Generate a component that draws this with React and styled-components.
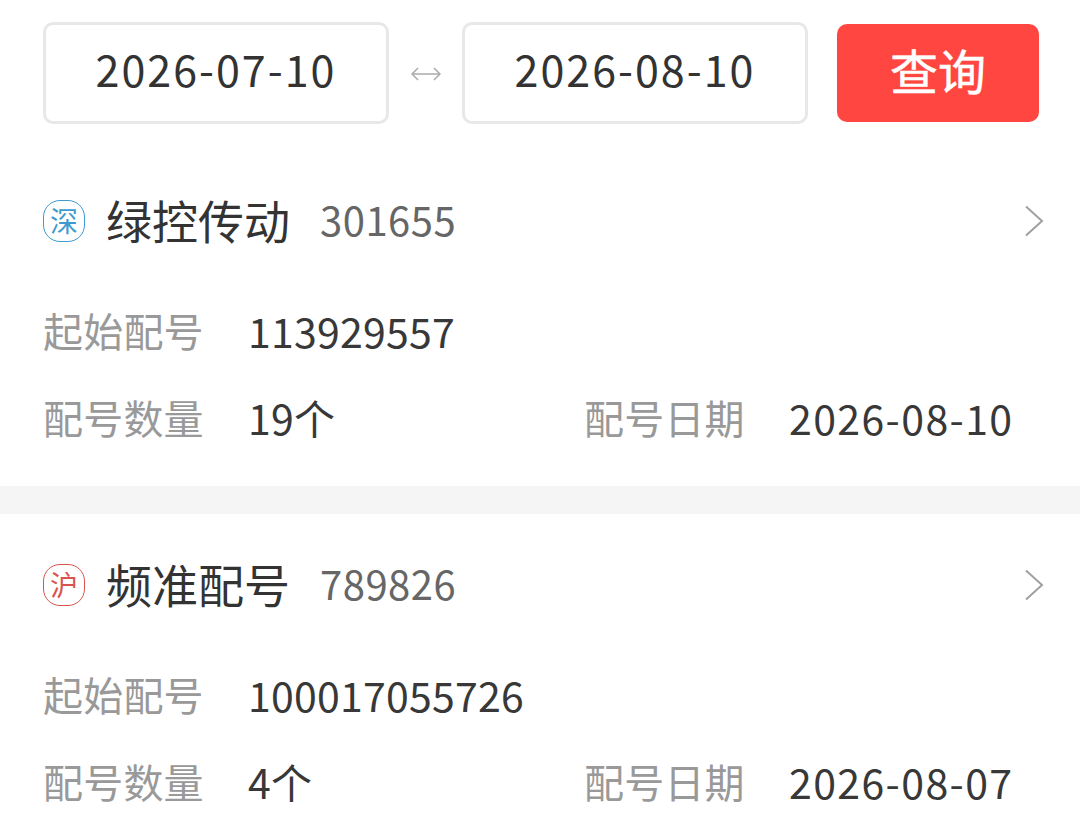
import styled, { createGlobalStyle } from 'styled-components'

const GlobalStyle = createGlobalStyle`
  html, body {
    margin: 0;
    padding: 0;
    background: #FFFFFF;
    overflow: hidden;
  }
  body {
    font-family: 'Noto Sans CJK SC', 'Noto Sans', sans-serif;
  }
`

const Page = styled.div`
  width: 1080px;
  height: 833px;
  overflow: hidden;
`

const FilterBar = styled.div`
  display: flex;
  align-items: center;
  height: 102px;
  padding: 22px 41px 0 43px;
`

const DateBox = styled.div`
  width: 346px;
  height: 102px;
  box-sizing: border-box;
  border: 3px solid #E8E8E8;
  border-radius: 10px;
  padding-bottom: 10px;
  display: flex;
  align-items: center;
  justify-content: center;
  font-size: 43px;
  letter-spacing: 2px;
  color: #333333;
`

const Separator = styled.div`
  width: 73px;
  display: flex;
  justify-content: center;
  padding: 2px 0 0 1px;
  box-sizing: border-box;
`

const SearchButton = styled.div`
  width: 202px;
  height: 98px;
  box-sizing: border-box;
  margin-left: 29px;
  padding-bottom: 8px;
  background: #FF4640;
  border-radius: 10px;
  color: #FFFFFF;
  font-size: 48px;
  -webkit-text-stroke: 0.5px #FFFFFF;
  display: flex;
  align-items: center;
  justify-content: center;
`

const Card = styled.div`
  height: ${(props) => props.$height}px;
  padding: 0 36px 0 43px;
  box-sizing: border-box;
`

const Divider = styled.div`
  height: 28px;
  background: #F5F5F5;
`

const CardHeader = styled.div`
  display: flex;
  align-items: center;
  height: 70px;
  padding-top: ${(props) => props.$top}px;
`

const Badge = styled.div`
  width: 42px;
  height: 42px;
  box-sizing: border-box;
  border: 1.5px solid ${(props) => props.$color};
  border-radius: 17px;
  padding-bottom: 3px;
  color: ${(props) => props.$color};
  font-size: 28px;
  display: flex;
  align-items: center;
  justify-content: center;
  margin-right: 21px;
`

const Name = styled.div`
  font-size: 46px;
  line-height: 70px;
  padding-bottom: 4px;
  color: #333333;
`

const Code = styled.div`
  font-size: 40px;
  line-height: 70px;
  letter-spacing: 0.5px;
  padding-bottom: 4px;
  color: #666666;
  margin-left: 30px;
  flex: 1;
`

const InfoGrid = styled.div`
  display: grid;
  grid-template-columns: 541px 1fr;
  grid-auto-rows: 87px;
  margin-top: 30px;
`

const InfoItem = styled.div`
  display: flex;
  align-items: center;
  grid-column: ${(props) => props.$column};
`

const Label = styled.span`
  width: 205px;
  font-size: 40px;
  letter-spacing: 0.2px;
  color: #999999;
  white-space: nowrap;
`

const Value = styled.span`
  font-size: 41px;
  letter-spacing: ${(props) => (props.$date ? '1.4px' : '0.25px')};
  color: #383838;
  white-space: nowrap;
`

function Chevron() {
  return (
    <svg width="20" height="32" viewBox="0 0 20 32" fill="none">
      <path d="M2 1.5 L18 16 L2 30.5" stroke="#A0A0A0" strokeWidth="2" />
    </svg>
  )
}

function Arrows() {
  return (
    <svg width="30" height="16" viewBox="0 0 30 16" fill="none">
      <path d="M1 8 H29 M7 2 L1 8 L7 14 M23 2 L29 8 L23 14" stroke="#ABABAB" strokeWidth="1.5" />
    </svg>
  )
}

const stocks = [
  { market: '深', color: '#3D9AD1', name: '绿控传动', code: '301655', start: '113929557', count: '19个', date: '2026-08-10', height: 362 },
  { market: '沪', color: '#D9534F', name: '频准配号', code: '789826', start: '100017055726', count: '4个', date: '2026-08-07', height: 320 },
]

function StockCard({ stock, first }) {
  return (
    <Card $height={stock.height}>
      <CardHeader $top={first ? 62 : 36}>
        <Badge $color={stock.color}>{stock.market}</Badge>
        <Name>{stock.name}</Name>
        <Code>{stock.code}</Code>
        <Chevron />
      </CardHeader>
      <InfoGrid>
        <InfoItem $column="1 / 3">
          <Label>起始配号</Label>
          <Value>{stock.start}</Value>
        </InfoItem>
        <InfoItem $column="1">
          <Label>配号数量</Label>
          <Value>{stock.count}</Value>
        </InfoItem>
        <InfoItem $column="2">
          <Label>配号日期</Label>
          <Value $date>{stock.date}</Value>
        </InfoItem>
      </InfoGrid>
    </Card>
  )
}

function App() {
  return (
    <Page>
      <GlobalStyle />
      <FilterBar>
        <DateBox>2026-07-10</DateBox>
        <Separator><Arrows /></Separator>
        <DateBox>2026-08-10</DateBox>
        <SearchButton>查询</SearchButton>
      </FilterBar>
      <StockCard stock={stocks[0]} first />
      <Divider />
      <StockCard stock={stocks[1]} />
    </Page>
  )
}

export default App
